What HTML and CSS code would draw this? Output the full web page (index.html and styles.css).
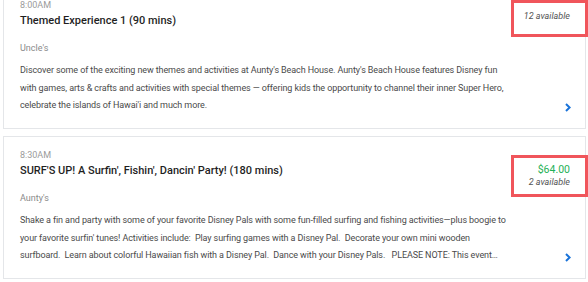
FILE: index.html
```html
<!DOCTYPE html>
<html lang="en">
<head>
    <meta charset="UTF-8">
    <meta name="viewport" content="width=device-width, initial-scale=1.0">
    <title>Activities</title>
    <link rel="stylesheet" href="styles.css">
</head>
<body>

<div class="activity-list">
    <div class="activity-card">
        <div class="activity-main">
            <div class="activity-time">8:00AM</div>
            <div class="activity-title">Themed Experience 1 (90 mins)</div>
            <div class="activity-venue">Uncle's</div>
            <p class="activity-desc">Discover some of the exciting new themes and activities at Aunty's Beach House. Aunty's Beach House features Disney fun with games, arts &amp; crafts and activities with special themes — offering kids the opportunity to channel their inner Super Hero, celebrate the islands of Hawai'i and much more.</p>
        </div>
        <div class="activity-side">
            <div class="activity-info">
                <div class="avail">12 available</div>
            </div>
            <svg class="chevron" width="6" height="9" viewBox="0 0 6 9"><path d="M1 1 L4.6 4.5 L1 8" fill="none" stroke="#1a73d9" stroke-width="2"/></svg>
        </div>
        <div class="highlight highlight-first"></div>
    </div>

    <div class="activity-card">
        <div class="activity-main">
            <div class="activity-time">8:30AM</div>
            <div class="activity-title">SURF'S UP! A Surfin', Fishin', Dancin' Party! (180 mins)</div>
            <div class="activity-venue">Aunty's</div>
            <p class="activity-desc">Shake a fin and party with some of your favorite Disney Pals with some fun-filled surfing and fishing activities—plus boogie to your favorite surfin' tunes! Activities include:&nbsp; Play surfing games with a Disney Pal.&nbsp; Decorate your own mini wooden surfboard.&nbsp; Learn about colorful Hawaiian fish with a Disney Pal.&nbsp; Dance with your Disney Pals.&nbsp;&nbsp; PLEASE NOTE: This event…</p>
        </div>
        <div class="activity-side">
            <div class="activity-info with-price">
                <div class="price">$64.00</div>
                <div class="avail">2 available</div>
            </div>
            <svg class="chevron" width="6" height="9" viewBox="0 0 6 9"><path d="M1 1 L4.6 4.5 L1 8" fill="none" stroke="#1a73d9" stroke-width="2"/></svg>
        </div>
        <div class="highlight highlight-second"></div>
    </div>
</div>

</body>
</html>
```

FILE: styles.css
```css
* {
    margin: 0;
    padding: 0;
    box-sizing: border-box;
}

body {
    font-family: Roboto, "Liberation Sans", sans-serif;
    background-color: #ffffff;
    color: #444;
}

.activity-list {
    margin-top: -14px;
    padding: 0 2px 0 3px;
    display: flex;
    flex-direction: column;
    gap: 7px;
}

.activity-card {
    position: relative;
    display: flex;
    border: 1px solid #e4e6e9;
    padding: 12px 15px 13px 16px;
    height: 143px;
}

.activity-main {
    flex: 1;
    min-width: 0;
}

.activity-time {
    font-size: 9px;
    line-height: 12px;
    color: #9b9b9b;
}

.activity-title {
    margin-top: 2px;
    font-size: 11px;
    line-height: 16px;
    font-weight: 500;
    color: #1f1f1f;
}

.activity-venue {
    margin-top: 13px;
    font-size: 9px;
    line-height: 12px;
    color: #8a8a8a;
}

.activity-desc {
    margin-top: 8px;
    font-size: 9px;
    letter-spacing: -0.1px;
    line-height: 17.5px;
    color: #4a4a4a;
}

.activity-side {
    width: 56px;
    display: flex;
    flex-direction: column;
    align-items: flex-end;
    justify-content: space-between;
}

.activity-info {
    padding-top: 11px;
    text-align: right;
    white-space: nowrap;
}

.activity-info.with-price {
    padding-top: 14px;
}

.price {
    font-size: 10.5px;
    line-height: 13px;
    color: #1fb157;
}

.avail {
    font-size: 9px;
    line-height: 13px;
    font-style: italic;
    color: #555;
}

.chevron {
    display: block;
    margin-right: -1px;
    margin-bottom: 3px;
}

/* red annotation boxes over the info column */
.highlight {
    position: absolute;
    right: -3px;
    width: 77px;
    border: 3px solid #f0555b;
}

.highlight-first {
    top: 13px;
    height: 37px;
}

.highlight-second {
    top: 18px;
    height: 42px;
}
```
